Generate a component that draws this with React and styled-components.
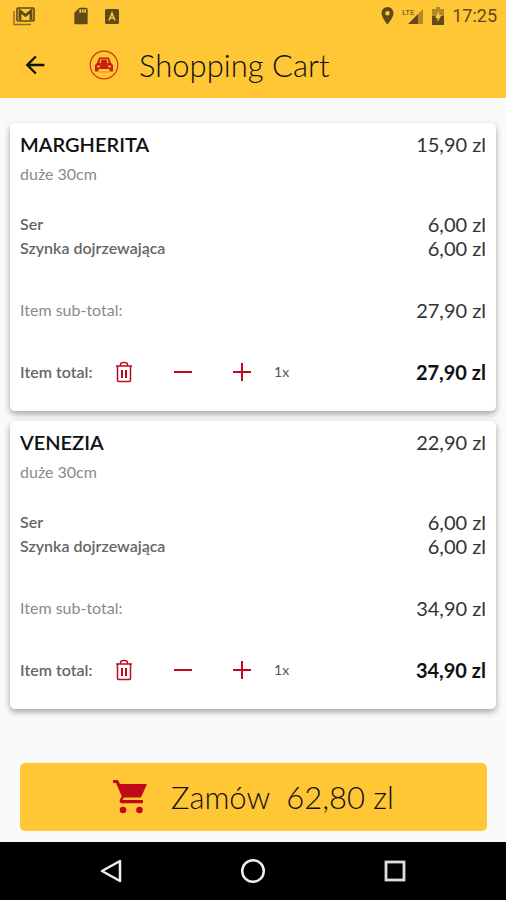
import styled, { createGlobalStyle } from 'styled-components'
import { useState } from 'react'
import { MdArrowBack, MdSdCard } from 'react-icons/md'

const GlobalStyle=createGlobalStyle`
*{
    box-sizing: border-box;
}
body{
    margin: 0;
    background-color: #fafafa;
    font-family: 'Lato', 'Open Sans', sans-serif;
}
button{
    font-family: inherit;
    border: none;
    padding: 0;
    background: none;
    color: inherit;
    cursor: pointer;
}
`
const Container=styled.div`
min-height: 100vh;
display: flex;
flex-direction: column;
`
const Header=styled.header`
background-color: #ffc636;
`
const StatusBar=styled.div`
height: 32px;
padding: 0 9px 0 13px;
display: flex;
align-items: center;
justify-content: space-between;
color: #61491a;
`
const StatusGroup=styled.div`
display: flex;
align-items: center;
gap: ${(props)=>props.$gap}px;
svg{
    display: block;
}
`
const Notification=styled.span`
margin-left: 22px;
`
const Clock=styled.time`
font-family: 'Roboto', sans-serif;
font-size: 18px;
font-weight: 400;
line-height: 32px;
`
const Toolbar=styled.div`
height: 66px;
padding: 0 20px;
display: flex;
align-items: center;
color: #111;
`
const BackButton=styled.button`
width: 30px;
height: 30px;
font-size: 28px;
display: flex;
align-items: center;
justify-content: center;
`
const Logo=styled.svg`
width: 30px;
height: 30px;
margin: 0 20px 0 39px;
`
const Title=styled.h1`
margin: 0;
font-size: 31px;
font-weight: 300;
line-height: 40px;
color: #111;
`
const Main=styled.main`
flex: 1;
display: flex;
flex-direction: column;
`
const Products=styled.section`
padding: 25px 10px 0;
display: flex;
flex-direction: column;
gap: 10px;
`
const Card=styled.article`
background-color: #fff;
border-radius: 5px;
padding: 7px 10px 17px;
box-shadow: 0 3px 6px rgba(0, 0, 0, 0.35);
`
const Row=styled.div`
display: flex;
align-items: center;
justify-content: space-between;
min-height: ${(props)=>props.$height}px;
margin-top: ${(props)=>props.$space || 0}px;
`
const Name=styled.h2`
margin: 0;
font-size: 20px;
font-weight: 600;
line-height: 28px;
color: #111;
`
const Size=styled.span`
font-size: 16px;
line-height: 20px;
color: #8a8a8a;
`
const Toppings=styled.div`
margin-top: 22px;
`
const Label=styled.span`
font-size: 16px;
font-weight: ${(props)=>props.$light ? 400 : 600};
line-height: 20px;
color: ${(props)=>props.$light ? '#8a8a8a' : '#666'};
`
const Price=styled.span`
font-size: 20px;
font-weight: ${(props)=>props.$bold ? 700 : 400};
line-height: 24px;
color: ${(props)=>props.$bold ? '#111' : '#333'};
`
const Actions=styled.div`
display: flex;
align-items: center;
`
const ActionLabel=styled(Label)`
width: 74px;
white-space: nowrap;
`
const ActionButton=styled.button`
width: 59px;
height: 44px;
display: flex;
align-items: center;
justify-content: center;
color: #c00a1c;
`
const Amount=styled.span`
padding-left: 3px;
font-size: 14px;
line-height: 20px;
color: #555;
`
const OrderBar=styled.div`
margin-top: auto;
padding: 48px 19px 11px 20px;
`
const OrderButton=styled.button`
width: 100%;
height: 68px;
border-radius: 5px;
background-color: #ffc636;
display: flex;
align-items: center;
justify-content: center;
gap: 24px;
font-size: 31px;
font-weight: 300;
color: #111;
svg{
    color: #c00a1c;
}
`
const OrderText=styled.span`
display: flex;
gap: 16px;
line-height: 40px;
`
const NavBar=styled.nav`
height: 58px;
background-color: #000;
display: flex;
align-items: center;
justify-content: center;
gap: 112px;
`
const NavButton=styled.button`
width: 30px;
height: 30px;
display: flex;
align-items: center;
justify-content: center;
`

const MailIcon = () => (
    <svg width="22" height="19" viewBox="0 0 22 19">
        <path d="M1 4v13.5h17" fill="none" stroke="currentColor" strokeWidth="1.4" opacity=".7"/>
        <rect x="4" y="1" width="17" height="13" rx="1" fill="none" stroke="currentColor" strokeWidth="1.6"/>
        <path d="M7 13V4L12.500 8.500 18 4V13" fill="none" stroke="currentColor" strokeWidth="2.800"/>
    </svg>
)

const KeyboardIcon = () => (
    <svg width="14" height="15" viewBox="0 0 14 15">
        <rect width="14" height="15" rx="1.500" fill="currentColor"/>
        <path d="M4 11.500L7 4l3 7.500M5 9h4" fill="none" stroke="#ffc636" strokeWidth="1.500"/>
    </svg>
)

const PinIcon = () => (
    <svg width="13" height="18" viewBox="0 0 13 18">
        <path fillRule="evenodd" d="M6.500 0A6 6 0 0 0 .5 6.200C.5 10.500 6.500 17.500 6.500 17.500s6-7 6-11.300A6 6 0 0 0 6.500 0zm0 8.500a2.300 2.300 0 1 1 0-4.600 2.300 2.300 0 0 1 0 4.600z" fill="currentColor"/>
    </svg>
)

const LteIcon = () => (
    <svg width="22" height="18" viewBox="0 0 22 18">
        <path d="M21 2v15h-5V7z" fill="currentColor" opacity=".5"/>
        <path d="M16 7v10H6z" fill="currentColor"/>
        <text x="0" y="8" fontFamily="Roboto, sans-serif" fontSize="8" fill="currentColor">LTE</text>
    </svg>
)

const BatteryIcon = () => (
    <svg width="12" height="18" viewBox="0 0 12 18">
        <path d="M4 0h4v2h4v7H0V2h4z" fill="currentColor" opacity=".5"/>
        <path d="M0 9h12v9H0z" fill="currentColor"/>
        <path d="M7 4L3 11h2.500v4L9.500 8H7z" fill="#ffc636"/>
    </svg>
)

const CarLogo = () => (
    <Logo viewBox="0 0 30 30">
        <circle cx="15" cy="15" r="13.800" fill="none" stroke="#d0390f" strokeWidth="1.200"/>
        <path d="M10 7.500h10l2 5.500 2 2v6.500h-3.500V19h-11v2.500H6V15l2-2z" fill="#c9200f"/>
        <path d="M11.500 9h7l1.200 4h-9.400z" fill="#ffc636"/>
        <path d="M12 13v-2.500L13.500 9l1.500 1 1.500-1L18 10.500V13z" fill="#c9200f"/>
        <path d="M8 16.500h3M19 16.500h3" stroke="#ffc636" strokeWidth="1.400"/>
        <path d="M10 22h10" stroke="#e08a20" strokeWidth="1"/>
    </Logo>
)

const CartIcon = () => (
    <svg width="34" height="34" viewBox="0 0 34 34">
        <path d="M0 0h5l2 4h27l-6 13.500H11l-1.500 2.500H30v3.200H9q-3.500-.7-2-4l1.800-3L3 3H0z" fill="currentColor"/>
        <circle cx="10" cy="30" r="3.300" fill="currentColor"/>
        <circle cx="26.500" cy="30" r="3.300" fill="currentColor"/>
    </svg>
)

const TrashIcon = () => (
    <svg width="18" height="22" viewBox="0 0 18 22" fill="none" stroke="currentColor" strokeWidth="1.500">
        <path d="M1 5h16M5.500 4.500V3.500Q5.500 1.500 9 1.500T12.500 3.500V4.500"/>
        <path d="M2.500 5v14.500q0 1 1 1h11q1 0 1-1V5"/>
        <path d="M7 9v8M11 9v8" strokeWidth="2"/>
    </svg>
)

const MinusIcon = () => (
    <svg width="18" height="18" viewBox="0 0 18 18">
        <path d="M0 9h18" stroke="currentColor" strokeWidth="2"/>
    </svg>
)

const PlusIcon = () => (
    <svg width="18" height="18" viewBox="0 0 18 18">
        <path d="M0 9h18M9 0v18" stroke="currentColor" strokeWidth="2"/>
    </svg>
)

const items=[
    {
        name: 'MARGHERITA',
        size: 'duże 30cm',
        price: 15.9,
        subtotal: 27.9,
        toppings: [{name: 'Ser', price: 6}, {name: 'Szynka dojrzewająca', price: 6}],
    },
    {
        name: 'VENEZIA',
        size: 'duże 30cm',
        price: 22.9,
        subtotal: 34.9,
        toppings: [{name: 'Ser', price: 6}, {name: 'Szynka dojrzewająca', price: 6}],
    },
]

const format=(value)=>value.toFixed(2).replace('.', ',') + ' zl'

const CartItem = ({item, amount, onChange}) => {
    return (
        <Card>
            <Row $height={28}>
                <Name>{item.name}</Name>
                <Price>{format(item.price)}</Price>
            </Row>
            <Row $height={32}>
                <Size>{item.size}</Size>
            </Row>
            <Toppings>
                {item.toppings.map((topping)=>(
                    <Row $height={24} key={topping.name}>
                        <Label>{topping.name}</Label>
                        <Price>{format(topping.price)}</Price>
                    </Row>
                ))}
            </Toppings>
            <Row $height={28} $space={36}>
                <Label $light>Item sub-total:</Label>
                <Price>{format(item.subtotal)}</Price>
            </Row>
            <Row $height={44} $space={26}>
                <Actions>
                    <ActionLabel>Item total:</ActionLabel>
                    <ActionButton aria-label="Remove" onClick={()=>onChange(0)}><TrashIcon/></ActionButton>
                    <ActionButton aria-label="Less" onClick={()=>onChange(Math.max(1, amount - 1))}><MinusIcon/></ActionButton>
                    <ActionButton aria-label="More" onClick={()=>onChange(amount + 1)}><PlusIcon/></ActionButton>
                    <Amount>{amount}x</Amount>
                </Actions>
                <Price $bold>{format(item.subtotal * amount)}</Price>
            </Row>
        </Card>
    )
}

const App = () => {

const [amounts, setAmounts] = useState([1, 1])

const handleAmount=(index, value)=>{
    setAmounts(amounts.map((amount, i)=>i === index ? value : amount))
}

const total=items.reduce((sum, item, i)=>sum + item.subtotal * amounts[i], 0)

    return (
        <Container>
            <GlobalStyle/>
            <Header>
                <StatusBar>
                    <StatusGroup $gap={14}>
                        <MailIcon/>
                        <Notification><MdSdCard size={20}/></Notification>
                        <KeyboardIcon/>
                    </StatusGroup>
                    <StatusGroup $gap={8}>
                        <PinIcon/>
                        <LteIcon/>
                        <BatteryIcon/>
                        <Clock>17:25</Clock>
                    </StatusGroup>
                </StatusBar>
                <Toolbar>
                    <BackButton aria-label="Back"><MdArrowBack/></BackButton>
                    <CarLogo/>
                    <Title>Shopping Cart</Title>
                </Toolbar>
            </Header>
            <Main>
                <Products>
                    {items.map((item, i)=>amounts[i] > 0 && (
                        <CartItem key={item.name} item={item} amount={amounts[i]} onChange={(value)=>handleAmount(i, value)}/>
                    ))}
                </Products>
                <OrderBar>
                    <OrderButton>
                        <CartIcon/>
                        <OrderText>
                            <span>Zamów</span>
                            <span>{format(total)}</span>
                        </OrderText>
                    </OrderButton>
                </OrderBar>
            </Main>
            <NavBar>
                <NavButton aria-label="Back">
                    <svg width="24" height="26" viewBox="0 0 24 26">
                        <path d="M21 3v20L3 13z" fill="none" stroke="#eee" strokeWidth="2.500" strokeLinejoin="round"/>
                    </svg>
                </NavButton>
                <NavButton aria-label="Home">
                    <svg width="26" height="26" viewBox="0 0 26 26">
                        <circle cx="13" cy="13" r="10.800" fill="none" stroke="#eee" strokeWidth="2.500"/>
                    </svg>
                </NavButton>
                <NavButton aria-label="Recent">
                    <svg width="22" height="22" viewBox="0 0 22 22">
                        <rect x="2" y="2" width="18" height="18" fill="none" stroke="#ddd" strokeWidth="2.800"/>
                    </svg>
                </NavButton>
            </NavBar>
        </Container>
    )
}

export default App
